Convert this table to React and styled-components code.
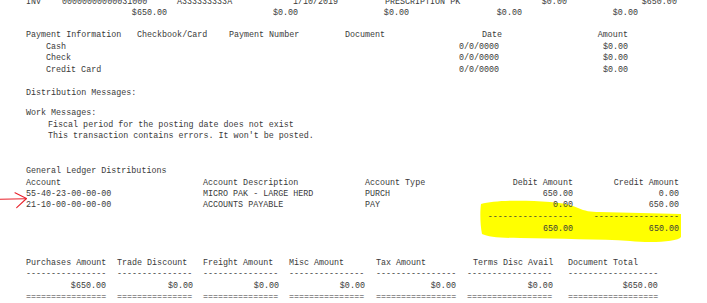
import React from "react";
import styled, { createGlobalStyle } from "styled-components";

const CW = 5.02;
const LH = 11.4;
const SHIFT = 2;

const Global = createGlobalStyle`
  html, body { margin: 0; padding: 0; background: #fff; }
  body { width: 707px; height: 303px; overflow: hidden; }
`;

const Page = styled.div`
  position: relative;
  width: 707px;
  height: 303px;
  overflow: hidden;
  display: flex;
  flex-direction: column;
  font-family: "Liberation Mono", "Courier New", monospace;
  font-size: 8.37px;
  color: #3a3a3a;
`;

const Report = styled.div`
  position: relative;
  z-index: 1;
  display: flex;
  flex-direction: column;
`;

const Line = styled.div`
  display: flex;
  height: ${LH}px;
  line-height: ${LH}px;
  margin-top: ${(p) => p.$mt}px;
  white-space: pre;
`;

const Cell = styled.span`
  flex: none;
  width: ${(p) => p.$w}px;
  margin-left: ${(p) => p.$ml}px;
`;

const Overlay = styled.svg`
  position: absolute;
  left: 0;
  top: 0;
  width: 707px;
  height: 303px;
  pointer-events: none;
  z-index: ${(p) => p.$z};
`;

const d = (n) => "-".repeat(n);
const e = (n) => "=".repeat(n);

const rows = [
  { y: 0.5, c: [["INV", 26], ["00000000000031000", 62], ["A333333333A", 177], ["1/10/2019", 293], ["PRESCRIPTION PK", 385], ["$0.00", 567, "r"], ["$650.00", 677, "r"]] },
  { y: 11.9, c: [["$650.00", 167, "r"], ["$0.00", 298, "r"], ["$0.00", 409, "r"], ["$0.00", 522, "r"], ["$0.00", 638, "r"]] },
  { y: 34, c: [["Payment Information", 26], ["Checkbook/Card", 137], ["Payment Number", 229], ["Document", 345], ["Date", 482], ["Amount", 628, "r"]] },
  { y: 45.5, c: [["Cash", 46], ["0/0/0000", 459], ["$0.00", 628, "r"]] },
  { y: 57, c: [["Check", 46], ["0/0/0000", 459], ["$0.00", 628, "r"]] },
  { y: 68.4, c: [["Credit Card", 46], ["0/0/0000", 459], ["$0.00", 628, "r"]] },
  { y: 91.7, c: [["Distribution Messages:", 26]] },
  { y: 112, c: [["Work Messages:", 26]] },
  { y: 123.3, c: [["Fiscal period for the posting date does not exist", 48]] },
  { y: 134.3, c: [["This transaction contains errors. It won't be posted.", 48]] },
  { y: 170, c: [["General Ledger Distributions", 26]] },
  { y: 181.7, c: [["Account", 26], ["Account Description", 203], ["Account Type", 365], ["Debit Amount", 573, "r"], ["Credit Amount", 679, "r"]] },
  { y: 193, c: [["55-40-23-00-00-00", 26], ["MICRO PAK - LARGE HERD", 203], ["PURCH", 365], ["650.00", 573, "r"], ["0.00", 679, "r"]] },
  { y: 204.3, c: [["21-10-00-00-00-00", 26], ["ACCOUNTS PAYABLE", 203], ["PAY", 365], ["0.00", 573, "r"], ["650.00", 679, "r"]] },
  { y: 215.7, c: [[d(17), 573, "r"], [d(17), 679, "r"]] },
  { y: 227.5, c: [["650.00", 573, "r"], ["650.00", 679, "r"]] },
  { y: 262, c: [["Purchases Amount", 26], ["Trade Discount", 117], ["Freight Amount", 203], ["Misc Amount", 289], ["Tax Amount", 376], ["Terms Disc Avail", 473], ["Document Total", 568]] },
  { y: 273, c: [[d(16), 26], [d(15), 117], [d(15), 203], [d(15), 289], [d(16), 376], [d(17), 467], [d(18), 568]] },
  { y: 284.8, c: [["$650.00", 106, "r"], ["$0.00", 193, "r"], ["$0.00", 279, "r"], ["$0.00", 365, "r"], ["$0.00", 456, "r"], ["$0.00", 553, "r"], ["$650.00", 658, "r"]] },
  { y: 295.5, c: [[e(16), 26], [e(15), 117], [e(15), 203], [e(15), 289], [e(16), 376], [e(17), 467], [e(18), 568]] },
];

function ReportLine({ specs, mt }) {
  let cur = 0;
  return (
    <Line $mt={mt}>
      {specs.map(([t, x, a], i) => {
        const w = t.length * CW;
        const x1 = a === "r" ? x - w : x;
        const ml = x1 - cur;
        cur = x1 + w;
        return (
          <Cell key={i} $w={w} $ml={ml}>
            {t}
          </Cell>
        );
      })}
    </Line>
  );
}

export default function App() {
  let prev = null;
  return (
    <>
      <Global />
      <Page>
        <Overlay $z={0} viewBox="0 0 707 303">
          <path
            d="M481,204 C495,200 525,200 550,202 C563,203 572,205 578,208 C585,211 590,212 600,212 L681,214 L681,237 C678,242 650,243 630,241 C600,239 560,239 520,238 C500,238 488,237 482,234 C480,224 480,211 481,204 Z"
            fill="#ffff00"
          />
        </Overlay>
        <Report>
          {rows.map((r, i) => {
            const top = r.y + SHIFT - LH / 2;
            const mt = prev === null ? top : top - prev;
            prev = top + LH;
            return <ReportLine key={i} specs={r.c} mt={mt} />;
          })}
        </Report>
        <Overlay $z={2} viewBox="0 0 707 303">
          <g fill="none" stroke="#e8202a" strokeWidth="1.1" strokeLinecap="round" strokeLinejoin="round">
            <path d="M0,199.3 L26,198.7" />
            <path d="M15,192.7 L26.5,198.5 L16.7,207.7" />
          </g>
        </Overlay>
      </Page>
    </>
  );
}
